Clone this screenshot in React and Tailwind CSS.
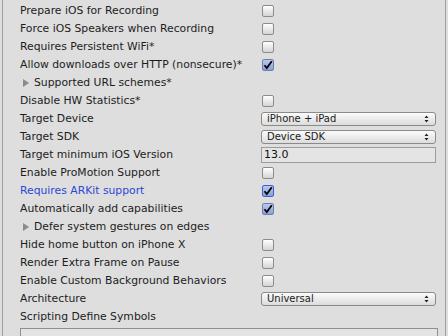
import React from "react";

const rows = [
  { label: "Prepare iOS for Recording", type: "check" },
  { label: "Force iOS Speakers when Recording", type: "check" },
  { label: "Requires Persistent WiFi*", type: "check" },
  { label: "Allow downloads over HTTP (nonsecure)*", type: "check", checked: true },
  { label: "Supported URL schemes*", type: "fold" },
  { label: "Disable HW Statistics*", type: "check" },
  { label: "Target Device", type: "select", value: "iPhone + iPad" },
  { label: "Target SDK", type: "select", value: "Device SDK" },
  { label: "Target minimum iOS Version", type: "text", value: "13.0" },
  { label: "Enable ProMotion Support", type: "check" },
  { label: "Requires ARKit support", type: "check", checked: true, blue: true, focus: true },
  { label: "Automatically add capabilities", type: "check", checked: true },
  { label: "Defer system gestures on edges", type: "fold" },
  { label: "Hide home button on iPhone X", type: "check" },
  { label: "Render Extra Frame on Pause", type: "check" },
  { label: "Enable Custom Background Behaviors", type: "check" },
  { label: "Architecture", type: "select", value: "Universal" },
  { label: "Scripting Define Symbols", type: "none" },
];

const Checkbox = ({ checked, focus }) => (
  <div
    className={`w-[12px] h-[12px] rounded-[2px] border flex items-center justify-center ${
      checked
        ? `${focus ? "border-[#3a5fd8]" : "border-[#6f7fa5]"} bg-gradient-to-b from-[#b9c8ec] to-[#8aa0d6]`
        : "border-[#8c8c8c] bg-gradient-to-b from-[#ffffff] to-[#d4d4d4]"
    }`}
  >
    {checked && (
      <svg width="10" height="10" viewBox="0 0 10 10">
        <path d="M1.5 5.2 L3.8 8 L8.8 1.2" fill="none" stroke="#000" strokeWidth="1.8" />
      </svg>
    )}
  </div>
);

const Select = ({ value }) => (
  <div className="w-[175px] h-[14px] rounded-[3px] border border-[#8a8a8a] bg-gradient-to-b from-[#fbfbfb] to-[#dcdcdc] flex items-center justify-between pl-[5px] pr-[6px] text-[10px] leading-none text-[#1a1a1a]">
    <span>{value}</span>
    <svg width="5" height="8" viewBox="0 0 5 8">
      <path d="M0.5 3 L2.5 0.5 L4.5 3 Z M0.5 5 L2.5 7.5 L4.5 5 Z" fill="#222" />
    </svg>
  </div>
);

const Row = ({ row }) => (
  <div className="h-[18px] flex items-center">
    <div className={`w-[242px] flex items-center ${row.blue ? "text-[#2a48d4]" : "text-[#1c1c1c]"}`}>
      {row.type === "fold" && (
        <svg className="ml-[3px] mr-[5px]" width="6" height="8" viewBox="0 0 6 8">
          <path d="M0 0 L6 4 L0 8 Z" fill="#8a8a8a" />
        </svg>
      )}
      <span>{row.label}</span>
    </div>
    {row.type === "check" && <Checkbox checked={row.checked} focus={row.focus} />}
    {row.type === "select" && <div className="-ml-[1px]"><Select value={row.value} /></div>}
    {row.type === "text" && (
      <div className="-ml-[1px] w-[175px] h-[16px] border border-[#9c9c9c] bg-[#e4e4e4] flex items-center pl-[2px] text-[11px] text-[#111]">
        {row.value}
      </div>
    )}
  </div>
);

export default function App() {
  return (
    <div className="w-[448px] h-[336px] overflow-hidden bg-[#dedede] flex" style={{ fontFamily: '"DejaVu Sans", sans-serif' }}>
      <div className="ml-[2px] w-[1px] bg-[#a0a0a0]" />
      <div className="flex-1 pl-[17px] pt-[2px] text-[10.8px]">
        {rows.map((row) => (
          <Row key={row.label} row={row} />
        ))}
        <div className="mt-[2px] w-[418px] h-[20px] border border-[#8f8f8f] bg-[#e4e4e4]" />
      </div>
      <div className="w-[1px] bg-[#a0a0a0] mr-[2px]" />
    </div>
  );
}
